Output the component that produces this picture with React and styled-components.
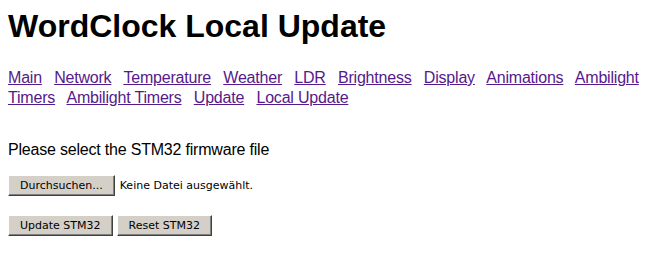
import React from "react";
import styled, { createGlobalStyle } from "styled-components";

const GlobalStyle = createGlobalStyle`
  body {
    margin: 0;
    padding: 8px;
    background: #ffffff;
    color: #000000;
    font-family: "Liberation Sans", Arial, sans-serif;
    font-size: 16px;
  }
`;

const Title = styled.h1`
  margin: 0;
  font-size: 32px;
  line-height: 37px;
  font-weight: bold;
`;

const Nav = styled.nav`
  margin-top: 23px;
  line-height: 20px;
  letter-spacing: -0.2px;
`;

const NavLink = styled.a`
  color: #551a8b;
  text-decoration: underline;
  margin-right: 8px;
`;

const Hint = styled.p`
  margin: 33px 0 0;
  line-height: 18px;
  letter-spacing: -0.2px;
`;

const Row = styled.div`
  display: flex;
  align-items: center;
  gap: ${(p) => p.gap || 4}px;
  margin-top: ${(p) => p.top}px;
`;

const Button = styled.button`
  height: 21px;
  padding: 0 11px;
  margin: 0;
  background: #d4d0c8;
  border: 1px solid;
  border-color: #ffffff #404040 #404040 #ffffff;
  box-shadow: inset -1px -1px 0 #808080;
  font-family: "DejaVu Sans", Tahoma, sans-serif;
  font-size: 11px;
  color: #000000;
  cursor: pointer;
`;

const FileLabel = styled.span`
  font-family: "DejaVu Sans", Tahoma, sans-serif;
  font-size: 11px;
`;

const pages = [
  "Main",
  "Network",
  "Temperature",
  "Weather",
  "LDR",
  "Brightness",
  "Display",
  "Animations",
  "Ambilight Timers",
  "Ambilight Timers",
  "Update",
  "Local Update",
];

export default function App() {
  return (
    <>
      <GlobalStyle />
      <Title>WordClock Local Update</Title>
      <Nav>
        {pages.map((name, i) => (
          <React.Fragment key={i}>
            <NavLink href="#">{name}</NavLink>{" "}
          </React.Fragment>
        ))}
      </Nav>
      <Hint>Please select the STM32 firmware file</Hint>
      <Row top={16} gap={5}>
        <Button>Durchsuchen...</Button>
        <FileLabel>Keine Datei ausgewählt.</FileLabel>
      </Row>
      <Row top={19}>
        <Button>Update STM32</Button>
        <Button>Reset STM32</Button>
      </Row>
    </>
  );
}
